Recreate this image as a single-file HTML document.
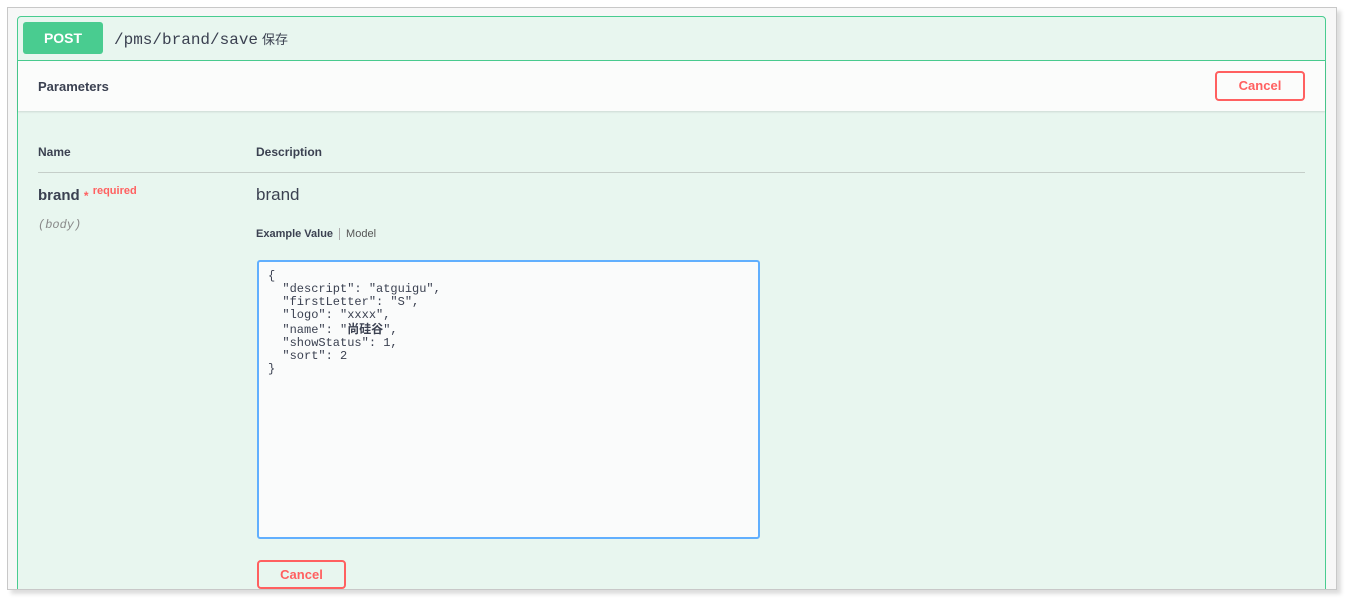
<!DOCTYPE html>
<html><head><meta charset="utf-8"><style>
*{box-sizing:border-box;margin:0;padding:0}
body{width:1349px;height:602px;background:#fff;position:relative;overflow:hidden;font-family:"Liberation Sans","Noto Sans CJK SC",sans-serif;color:#3b4151}
.frame{position:absolute;left:7px;top:7px;width:1330px;height:583px;border:1px solid #c8c8c8;background:#f7f7f7;box-shadow:4px 4px 4px #ddd;overflow:hidden}
.op{position:absolute;left:9px;top:8px;width:1309px;height:600px;border:1px solid #49cc90;border-radius:4px;background:#e8f6ef}
.hdr{height:44px;border-bottom:1px solid #49cc90;position:relative}
.post{position:absolute;left:5px;top:5px;width:80px;height:32px;background:#49cc90;border-radius:3px;color:#fff;font-weight:bold;font-size:14px;text-align:center;line-height:32px}
.path{position:absolute;left:96px;top:12px;font-family:"Liberation Mono",monospace;font-size:16px;color:#3b4151}
.path span{font-family:"Noto Sans CJK SC",sans-serif;font-size:13px;margin-left:4px}
.params{height:50px;background:#fbfcfb;box-shadow:0 1px 2px rgba(0,0,0,.12);position:relative}
.params b{position:absolute;left:20px;top:18px;font-size:13px}
.btn{position:absolute;border:2px solid #ff6060;border-radius:4px;color:#ff6060;font-weight:bold;font-size:13px;text-align:center;background:transparent}
.abs{position:absolute}
</style></head><body>
<div class="frame"><div class="op">
<div class="hdr"><div class="post">POST</div><div class="path">/pms/brand/save<span>保存</span></div></div>
<div class="params"><b>Parameters</b><div class="btn" style="left:1197px;top:10px;width:90px;height:30px;line-height:26px">Cancel</div></div>
<div class="abs" style="left:20px;top:128px;font-size:12px;font-weight:bold">Name</div>
<div class="abs" style="left:238px;top:128px;font-size:12px;font-weight:bold">Description</div>
<div class="abs" style="left:20px;top:155px;width:1267px;border-top:1px solid #c5cec9"></div>
<div class="abs" style="left:20px;top:170px;font-size:15px;font-weight:bold">brand <span style="color:#ff6060;font-size:12px">*</span> <span style="color:#ff6060;font-size:11px;position:relative;top:-6px">required</span></div>
<div class="abs" style="left:20px;top:201px;font-size:12px;font-style:italic;font-family:'Liberation Mono',monospace;color:#888">(body)</div>
<div class="abs" style="left:238px;top:168px;font-size:17px">brand</div>
<div class="abs" style="left:238px;top:211px;font-size:11px"><b>Example Value</b><span style="border-left:1px solid #aaa;margin-left:6px;padding-left:6px;color:#555">Model</span></div>
<div class="abs" style="left:239px;top:243px;width:503px;height:279px;border:2px solid #61affe;border-radius:3px;background:#fafbfb;padding:8px 9px;font-family:'Liberation Mono',monospace;font-size:12px;line-height:13px;white-space:pre;color:#3b4151">{
  "descript": "atguigu",
  "firstLetter": "S",
  "logo": "xxxx",
  "name": "<b style="font-family:'Noto Sans CJK SC',sans-serif">尚硅谷</b>",
  "showStatus": 1,
  "sort": 2
}</div>
<div class="btn" style="left:239px;top:543px;width:89px;height:29px;line-height:25px">Cancel</div>
</div></div>
</body></html>
